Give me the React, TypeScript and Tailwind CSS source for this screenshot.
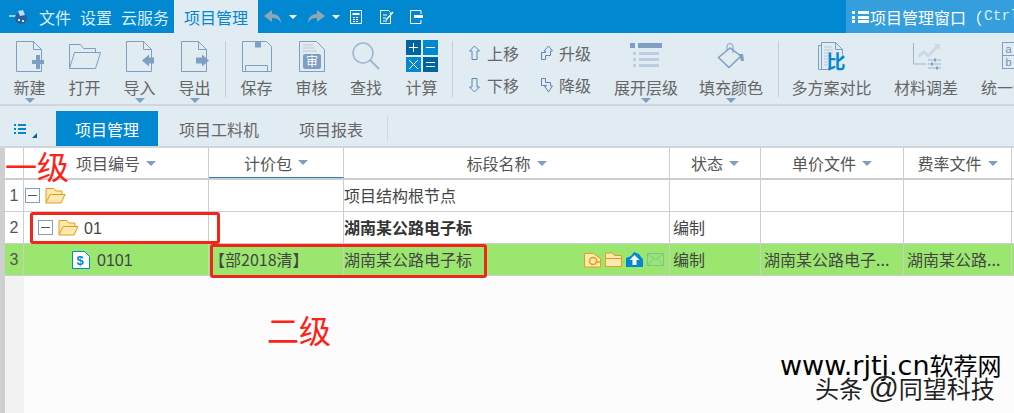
import type { ReactNode } from "react"

const font = { fontFamily: '"Noto Sans CJK SC", "Liberation Sans", sans-serif' }

const S = "#7f9fc2"

function Caret({ className = "" }: { className?: string }) {
  return (
    <svg width="10" height="5" viewBox="0 0 10 5" className={className}>
      <path d="M0 0h10L5 5z" fill="#7f9fc2" />
    </svg>
  )
}

// 工具栏按钮：图标 + 文字 + 可选下拉箭头
function Tool({ w, label, icon, caret }: { w: string; label: string; icon: ReactNode; caret?: boolean }) {
  return (
    <div className={`${w} shrink-0 flex flex-col items-center relative h-full`}>
      <div className="h-[34px] mt-[6px] flex items-center justify-center">{icon}</div>
      <div className="text-[16px] leading-[20px] mt-[4px] text-[#666] whitespace-nowrap">{label}</div>
      {caret && <Caret className="absolute top-[65px]" />}
    </div>
  )
}

function Sep({ className }: { className: string }) {
  return <div className={`w-px h-[56px] mt-[8px] bg-[#c3ced6] shrink-0 ${className}`} />
}

function DocIcon({ children }: { children?: ReactNode }) {
  return (
    <svg width="28" height="33" viewBox="0 0 28 33">
      <path d="M.5 1.500h17l8 8v22H.5z M17.500 1.500v8h8" fill="none" stroke={S} />
      {children}
    </svg>
  )
}

const NewIcon = (
  <DocIcon>
    <path d="M16 20h12v4H16z M20 15h4v14h-4z" fill={S} />
  </DocIcon>
)
const ImportIcon = (
  <DocIcon>
    <path d="M16 20.500l7-6v3h5v6h-5v3z" fill={S} />
  </DocIcon>
)
const ExportIcon = (
  <DocIcon>
    <path d="M28 20.500l-7-6v3h-6v6h6v3z" fill={S} />
  </DocIcon>
)
const OpenIcon = (
  <svg width="34" height="28" viewBox="0 0 34 28">
    <path d="M1.500 26.500V2.500h11l3 4h12v4" fill="none" stroke={S} />
    <path d="M1.500 26.500l5-16h26l-5 16z" fill="none" stroke={S} />
  </svg>
)
const SaveIcon = (
  <svg width="32" height="33" viewBox="0 0 32 33">
    <path d="M1.500 1.500h24l5 5v25h-29z" fill="none" stroke={S} />
    <path d="M14 1.500h6v6h-6z" fill={S} />
    <path d="M4.500 31.500v-6h22v6" fill="none" stroke={S} />
  </svg>
)
const AuditIcon = (
  <svg width="28" height="33" viewBox="0 0 28 33">
    <path d="M1.500 1.500h17l8 8v22h-25z" fill="none" stroke={S} />
    <path d="M5 5h10M5 8h12M5 11h14" stroke="#b9c9da" />
    <rect x="5" y="14" width="18" height="15" rx="2" fill={S} />
    <text x="14" y="26" fontSize="12" fill="#fff" textAnchor="middle">审</text>
  </svg>
)
const SearchIcon = (
  <svg width="30" height="30" viewBox="0 0 30 30">
    <circle cx="12" cy="12" r="10" fill="none" stroke="#9db6d0" strokeWidth="1.500" />
    <path d="M19 19l9 9" stroke="#9db6d0" strokeWidth="2" />
  </svg>
)
const CalcIcon = (
  <svg width="32" height="32" viewBox="0 0 32 32">
    <rect x="0" y="0" width="15" height="15" fill="#00659f" />
    <rect x="17" y="0" width="15" height="15" fill="#0288d1" />
    <rect x="0" y="17" width="15" height="15" fill="#0288d1" />
    <rect x="17" y="17" width="15" height="15" fill="#00659f" />
    <path d="M3 7.500h9M7.500 3v9M20 7.500h9M3 20l9 9M12 20l-9 9M20 22.500h9M20 26.500h9" stroke="#fff" />
  </svg>
)
const ExpandIcon = (
  <svg width="32" height="28" viewBox="0 0 32 28">
    <rect x="0" y="1" width="5" height="5" fill={S} />
    <rect x="8" y="1" width="24" height="5" fill={S} />
    <path d="M3 10h3v3H3zM3 16h3v3H3zM3 22h3v3H3z" fill="#bccee0" />
    <path d="M9 10h20v3H9zM9 16h20v3H9zM9 22h20v3H9z" fill="#bccee0" />
  </svg>
)
const FillIcon = (
  <svg width="28" height="26" viewBox="0 0 28 26">
    <path d="M13 5L1.500 14.500 12 24.500 24 13z" fill="none" stroke={S} strokeWidth="1.500" />
    <path d="M10 7V3.500a3 3 0 0 1 6 0V10" fill="none" stroke={S} />
    <path d="M22 11h4l1 7h-3z" fill={S} />
  </svg>
)
const CompareIcon = (
  <svg width="28" height="29" viewBox="0 0 28 29">
    <path d="M.5 3.500h3M.5 3.500v24h9" fill="none" stroke={S} />
    <path d="M3.500 27V.5h14l7 7v5M17.500.5v7h7" fill="none" stroke={S} />
    <path d="M6 5h8M6 8h9M6 11h9M6 14h8M6 17h4M6 20h4M6 23h4" stroke="#b9c9da" />
    <text x="18" y="27" fontSize="19" fontWeight="700" fill="#0288d1" textAnchor="middle">比</text>
  </svg>
)
const AdjustIcon = (
  <svg width="29" height="28" viewBox="0 0 29 28">
    <path d="M1.500 1v21h13" fill="none" stroke="#9db6d0" />
    <path d="M6 13l6-5 4 4 8-8-3-2h7v7l-2-3-10 10-4-4-5 4z" fill="#ccd8e4" />
    <path d="M16 18h13M16 22h13M16 26h13" stroke="#9db6d0" />
    <path d="M22 16.500h2v3h-2zM19 20.500h2v3h-2zM24 24.500h2v3h-2z" fill={S} />
  </svg>
)
const UnifyIcon = (
  <svg width="22" height="28" viewBox="0 0 22 28">
    <rect x="0.500" y="0.500" width="12" height="26" fill="none" stroke={S} />
    <path d="M0.500 13.500h12" stroke={S} />
    <text x="6.500" y="11" fontSize="11" fill="#6f8fb2" textAnchor="middle" fontFamily="Liberation Sans">a</text>
    <text x="6.500" y="24" fontSize="11" fill="#6f8fb2" textAnchor="middle" fontFamily="Liberation Sans">b</text>
    <path d="M14 11l5 3-5 3z" fill={S} />
  </svg>
)

function MoveItem({ label, path }: { label: string; path: string }) {
  return (
    <div className="flex items-center h-[32px]">
      <svg width="13" height="16" viewBox="0 0 13 16" className="mr-[6px]">
        <path d={path} fill="none" stroke="#5d86b4" />
      </svg>
      <span className="text-[16px] text-[#666]">{label}</span>
    </div>
  )
}

const columns = [
  { w: "w-[185px]", label: "项目编号" },
  { w: "w-[135px]", label: "计价包" },
  { w: "w-[326px]", label: "标段名称" },
  { w: "w-[91px]", label: "状态" },
  { w: "w-[143px]", label: "单价文件" },
  { w: "w-[108px]", label: "费率文件" },
]

function Cell({ w, children, className = "" }: { w: string; children?: ReactNode; className?: string }) {
  return (
    <div className={`${w} shrink-0 h-full border-r border-[#cdcdcd] flex items-center whitespace-nowrap overflow-hidden ${className}`}>
      {children}
    </div>
  )
}

function Minus() {
  return (
    <span className="w-[15px] h-[15px] border border-[#7f9fc2] bg-white flex items-center justify-center shrink-0">
      <span className="w-[9px] h-px bg-[#555]" />
    </span>
  )
}

function FolderOpen() {
  return (
    <svg width="21" height="17" viewBox="0 0 21 17" className="shrink-0">
      <path d="M1 16V1.500h8l2 2.500h6v3" fill="#fbe9b0" stroke="#eb9a1e" />
      <path d="M1 16l4-8.500h15L16 16z" fill="#fbe9b0" stroke="#eb9a1e" />
    </svg>
  )
}

function Row({ n, children, className = "" }: { n: number; children: ReactNode; className?: string }) {
  return (
    <div className={`h-[32px] flex border-b border-[#cdcdcd] ${className}`}>
      <div className="w-[19px] shrink-0 border-r border-[#cdcdcd] flex items-center justify-center text-[16px] text-[#555]" style={{ fontFamily: "Liberation Sans" }}>
        {n}
      </div>
      {children}
    </div>
  )
}

export default function App() {
  return (
    <div className="w-[1014px] h-[413px] relative overflow-hidden bg-[#fcfcfc] text-[#444]" style={font}>
      {/* 标题栏 */}
      <div className="h-[33px] bg-[#0288d1] flex items-center text-white relative">
        <svg width="20" height="16" viewBox="0 0 20 16" className="ml-[8px] mr-[11px]">
          <path d="M1 6h11v2H1z" fill="#8fd0ef" />
          <circle cx="13" cy="9" r="6" fill="#2a5f9e" />
          <path d="M10 2l5-1 2 5-5 1z" fill="#b7e0f4" />
          <path d="M10 10h2v2h-2zM14 11h2v2h-2z" fill="#cfe8f7" />
        </svg>
        <span className="text-[16px] text-[#d6effc] w-[41px]">文件</span>
        <span className="text-[16px] text-[#d6effc] w-[41px]">设置</span>
        <span className="text-[16px] text-[#d6effc] w-[53px]">云服务</span>
        <div className="w-[84px] h-full bg-[#e1ebf2] text-[#0288d1] text-[16px] flex items-center justify-center">项目管理</div>
        <svg width="18" height="15" viewBox="0 0 18 15" className="ml-[6px]">
          <path d="M0 7l8-6v4c5 0 9 3 9 9-2-4-5-5-9-5v4z" fill="#8fa6b8" />
        </svg>
        <svg width="8" height="4" viewBox="0 0 8 4" className="ml-[7px]">
          <path d="M0 0h8L4 4z" fill="#fff" />
        </svg>
        <svg width="18" height="15" viewBox="0 0 18 15" className="ml-[10px]">
          <path d="M18 7l-8-6v4C5 5 1 8 1 14c2-4 5-5 9-5v4z" fill="#8fa6b8" />
        </svg>
        <svg width="8" height="4" viewBox="0 0 8 4" className="ml-[7px]">
          <path d="M0 0h8L4 4z" fill="#fff" />
        </svg>
        <svg width="12" height="14" viewBox="0 0 12 14" className="ml-[10px]">
          <path d="M.5.500h11v13H.5z" fill="none" stroke="#fff" />
          <path d="M2.500 3h7v2h-7zM3 7h2v1H3zM6 7h2v1H6zM3 9h2v1H3zM6 9h2v1H6zM3 11h2v1H3zM6 11h2v1H6z" fill="#fff" />
        </svg>
        <svg width="15" height="14" viewBox="0 0 15 14" className="ml-[18px]">
          <path d="M.5.500h8l2 2v11H.5z M3 5h4M3 8h3M3 11h4" fill="none" stroke="#fff" />
          <path d="M6 10l7-8" stroke="#fff" strokeWidth="1.500" />
        </svg>
        <svg width="14" height="14" viewBox="0 0 14 14" className="ml-[15px]">
          <path d="M11 4V.5H.5v13H11V10" fill="none" stroke="#fff" />
          <path d="M4 5h9v3H4z" fill="#fff" />
        </svg>
        <div className="absolute left-[846px] right-0 top-0 h-full bg-[#349fdc] flex items-center overflow-hidden">
          <svg width="17" height="14" viewBox="0 0 17 14" className="ml-[6px] shrink-0 mr-[1px]">
            <path d="M0 1h3v3H0zM0 6h3v3H0zM0 10h3v3H0zM6 1h11v3H6zM6 6h11v3H6zM6 10h11v3H6z" fill="#fff" />
          </svg>
          <span className="text-[16px] text-white whitespace-nowrap">项目管理窗口（</span>
          <span className="text-[14.500px] ml-[2px] text-[#d6effc] whitespace-nowrap" style={{ fontFamily: "Liberation Mono" }}>Ctrl+</span>
        </div>
      </div>

      {/* 工具栏 */}
      <div className="h-[73px] bg-[#e1ebf2] border-b-2 border-[#cfd6db] flex pl-[2px] overflow-hidden">
        <Tool w="w-[55px]" label="新建" icon={NewIcon} caret />
        <Tool w="w-[55px]" label="打开" icon={OpenIcon} />
        <Tool w="w-[55px]" label="导入" icon={ImportIcon} caret />
        <Tool w="w-[55px]" label="导出" icon={ExportIcon} caret />
        <Sep className="ml-[3px] mr-[3px]" />
        <Tool w="w-[55px]" label="保存" icon={SaveIcon} />
        <Tool w="w-[55px]" label="审核" icon={AuditIcon} />
        <Tool w="w-[54px]" label="查找" icon={SearchIcon} />
        <Tool w="w-[57px]" label="计算" icon={CalcIcon} />
        <Sep className="ml-[2px] mr-[15px]" />
        <div className="w-[72px] shrink-0 pt-[4px]">
          <MoveItem label="上移" path="M6.500 1l5 5H9v8.500H4V6H1.500z" />
          <MoveItem label="下移" path="M6.500 15l5-5H9V1.500H4V10H1.500z" />
        </div>
        <div className="w-[73px] shrink-0 pt-[4px]">
          <MoveItem label="升级" path="M8.500 1l4 5H10.500v4.500h-5v4h-4v-7h4V6H4z" />
          <MoveItem label="降级" path="M1.500 1.500h4v4h5V9h2l-4 6-4-6h2V8.500h-5z" />
        </div>
        <Tool w="w-[66px]" label="展开层级" icon={ExpandIcon} caret />
        <div className="w-[20px] shrink-0" />
        <Tool w="w-[64px]" label="填充颜色" icon={FillIcon} caret />
        <Sep className="ml-[15px] mr-[12px]" />
        <Tool w="w-[81px]" label="多方案对比" icon={CompareIcon} />
        <div className="w-[22px] shrink-0" />
        <Tool w="w-[64px]" label="材料调差" icon={AdjustIcon} />
        <div className="w-[23px] shrink-0" />
        <Tool w="w-[64px]" label="统一调价" icon={UnifyIcon} />
      </div>

      {/* 页签 */}
      <div className="h-[42px] bg-[#e1ebf2] border-b-2 border-[#cfd6db] flex items-end">
        <div className="w-[56px] h-full relative shrink-0">
          <svg width="25" height="16" viewBox="0 0 25 16" className="absolute left-[14px] top-[17px]">
            <path d="M0 1h2v2H0zM4 1h8v2H4zM0 5h2v2H0zM4 5h8v2H4zM0 9h2v2H0zM4 9h8v2H4z" fill="#0288d1" />
            <path d="M23 10v5h-5z" fill="#00659f" />
          </svg>
        </div>
        <div className="w-[102px] h-[35px] bg-[#0288d1] text-white text-[16px] flex items-center justify-center shrink-0">项目管理</div>
        <div className="w-[122px] h-[35px] text-[16px] text-[#666] flex items-center justify-center shrink-0">项目工料机</div>
        <div className="w-[102px] h-[35px] text-[16px] text-[#666] flex items-center justify-center shrink-0">项目报表</div>
        <div className="w-px h-[25px] bg-[#d0d8de] mb-[5px] ml-[5px]" />
      </div>

      {/* 表格 */}
      <div className="flex h-[265px]">
        <div className="w-[5px] bg-[#cfcfcf] shrink-0" />
        <div className="flex-1 min-w-0 flex flex-col">
          <div className="h-[32px] flex border-b-2 border-[#cdcdcd] bg-white">
            <div className="w-[19px] shrink-0 border-r border-[#cdcdcd]" />
            {columns.map((c, i) => (
              <Cell
                key={c.label}
                w={c.w}
                className={`justify-center gap-[6px] text-[16px] text-[#555] ${i === 1 ? "border-b border-b-[#2f7fb5] h-[31px]" : ""}`}
              >
                <span>{c.label}</span>
                <Caret />
              </Cell>
            ))}
          </div>

          <Row n={1} className="bg-white">
            <Cell w={columns[0].w} className="pl-[1px] gap-[5px]">
              <Minus />
              <FolderOpen />
            </Cell>
            <Cell w={columns[1].w} />
            <Cell w={columns[2].w} className="text-[16px] pb-[2px]">项目结构根节点</Cell>
            <Cell w={columns[3].w} />
            <Cell w={columns[4].w} />
            <Cell w={columns[5].w} />
          </Row>
          <Row n={2} className="bg-white">
            <Cell w={columns[0].w} className="pl-[14px] gap-[5px]">
              <Minus />
              <FolderOpen />
              <span className="text-[16px] pt-[2px]" style={{ fontFamily: "Liberation Sans" }}>01</span>
            </Cell>
            <Cell w={columns[1].w} />
            <Cell w={columns[2].w} className="text-[16px] pb-[2px] font-bold text-[#333]">湖南某公路电子标</Cell>
            <Cell w={columns[3].w} className="text-[16px] pb-[2px] pl-[3px]">编制</Cell>
            <Cell w={columns[4].w} />
            <Cell w={columns[5].w} />
          </Row>
          <Row n={3} className="bg-[#9ae66f]">
            <Cell w={columns[0].w} className="pl-[48px] gap-[7px]">
              <svg width="18" height="18" viewBox="0 0 18 18" className="shrink-0">
                <path d="M.5.500h12l5 5v12H.5z" fill="#fff" stroke="#0288d1" />
                <text x="8" y="14" fontSize="13" fontWeight="700" fill="#0288d1" textAnchor="middle" fontFamily="Liberation Sans">$</text>
              </svg>
              <span className="text-[16px] pt-[2px]" style={{ fontFamily: "Liberation Sans" }}>0101</span>
            </Cell>
            <Cell w={columns[1].w} className="text-[16px] pb-[2px]">【部2018清】</Cell>
            <Cell w={columns[2].w} className="text-[16px] justify-between pr-[5px]">
              <span className="pb-[2px]">湖南某公路电子标</span>
              <span className="flex items-center gap-[4px]">
                <svg width="17" height="16" viewBox="0 0 17 16">
                  <path d="M.5 15V1.500h9l7 5V15z" fill="#fbe9b0" stroke="#eb9a1e" />
                  <circle cx="9" cy="9" r="3.500" fill="none" stroke="#eb9a1e" strokeWidth="1.500" />
                  <path d="M12 10h5" stroke="#eb9a1e" strokeWidth="1.500" />
                </svg>
                <svg width="17" height="15" viewBox="0 0 17 15">
                  <path d="M.5 14.500V1h7l2 2.500h7v11z" fill="#fbe9b0" stroke="#eb9a1e" />
                  <path d="M.5 6.500h16" stroke="#eb9a1e" />
                </svg>
                <svg width="17" height="15" viewBox="0 0 17 15">
                  <path d="M0 15V6l5-2 3-4 5 2 2 3 2 2v8z" fill="#0288d1" />
                  <path d="M8.500 3l5 5h-3v5h-4V8h-3z" fill="#fff" />
                </svg>
                <svg width="17" height="13" viewBox="0 0 17 13">
                  <path d="M.5.500h16v12H.5zM.5.500l8 6 8-6M.5 12.500l6-7M16.500 12.500l-6-7" fill="none" stroke="#7cc0a0" />
                </svg>
              </span>
            </Cell>
            <Cell w={columns[3].w} className="text-[16px] pb-[2px] pl-[3px]">编制</Cell>
            <Cell w={columns[4].w} className="text-[16px] pb-[2px] pl-[3px]">湖南某公路电子...</Cell>
            <Cell w={columns[5].w} className="text-[16px] pb-[2px] pl-[3px]">湖南某公路...</Cell>
          </Row>
          <div className="flex-1 flex">
            <div className="w-[19px] bg-[#f2f2f2]" />
          </div>
        </div>
      </div>

      {/* 标注 */}
      <div className="absolute left-[5px] top-[146px] text-[32px] leading-[38px] text-[#ff2018]">一级</div>
      <div className="absolute left-[30px] top-[212px] w-[190px] h-[32px] border-[3px] border-[#f0261a] rounded-[3px]" />
      <div className="absolute left-[210px] top-[244px] w-[277px] h-[34px] border-[3px] border-[#f0261a] rounded-[3px]" />
      <div className="absolute left-[267px] top-[310px] text-[32px] leading-[38px] text-[#ff2018]">二级</div>
      <div className="absolute left-[780px] top-[351px] text-[24px] leading-[28px] text-black whitespace-nowrap">
        <span className="text-[27px]" style={{ fontFamily: "DejaVu Sans" }}>www.rjtj.cn</span>软荐网
      </div>
      <div className="absolute left-[815px] top-[375px] text-[24px] leading-[26px] text-[#222] whitespace-nowrap" style={{ textShadow: "0 0 2px #fff" }}>
        头条 <span className="text-[30px] leading-[26px]" style={{ fontFamily: "Liberation Sans" }}>@</span>同望科技
      </div>
    </div>
  )
}
